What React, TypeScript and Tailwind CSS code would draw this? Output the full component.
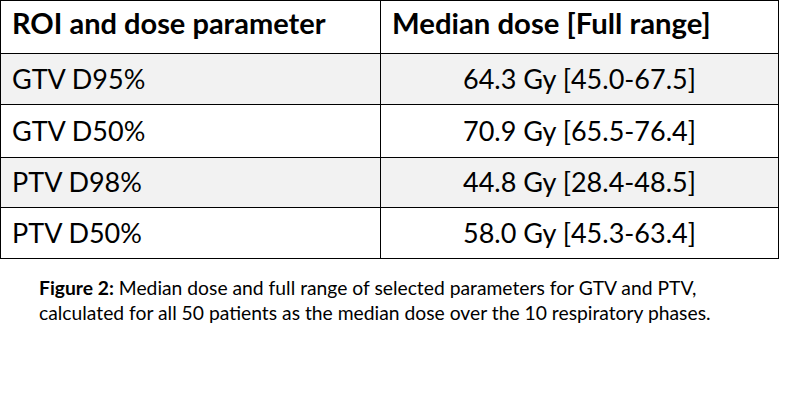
const rows = [
  { roi: "GTV D95%", dose: "64.3 Gy [45.0-67.5]", shaded: true, h: "h-[51px]" },
  { roi: "GTV D50%", dose: "70.9 Gy [65.5-76.4]", shaded: false, h: "h-[53px]" },
  { roi: "PTV D98%", dose: "44.8 Gy [28.4-48.5]", shaded: true, h: "h-[50px]" },
  { roi: "PTV D50%", dose: "58.0 Gy [45.3-63.4]", shaded: false, h: "h-[50px]" },
];

export default function App() {
  return (
    <div className="w-[794px] h-[408px] bg-white text-black font-['Lato',sans-serif]">
      <div className="w-[779px] border border-black">
        <div className="grid grid-cols-[380px_1fr] h-[53px] border-b border-black">
          <div className="border-r border-black pl-[11px] pt-[4px] text-[29px] leading-[36px] font-bold">
            ROI and dose parameter
          </div>
          <div className="pl-[11px] pt-[4px] text-[29.3px] leading-[36px] font-bold">
            Median dose [Full range]
          </div>
        </div>
        {rows.map((r, i) => (
          <div
            key={r.roi}
            className={`grid grid-cols-[380px_1fr] ${r.h} ${
              i < rows.length - 1 ? "border-b border-black" : ""
            } ${r.shaded ? "bg-[#f2f2f2]" : ""}`}
          >
            <div className="border-r border-black pl-[11px] flex items-center text-[27px]">
              {r.roi}
            </div>
            <div className="flex items-center justify-center text-[27px]">
              {r.dose}
            </div>
          </div>
        ))}
      </div>
      <p className="pl-[39px] pt-[16px] text-[19.3px] leading-[25px]">
        <span className="font-bold">Figure 2:</span> Median dose and full range of
        selected parameters for GTV and PTV,
        <br />
        calculated for all 50 patients as the median dose over the 10 respiratory
        phases.
      </p>
    </div>
  );
}
